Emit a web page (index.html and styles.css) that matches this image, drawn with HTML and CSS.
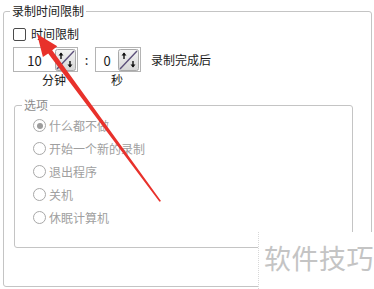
FILE: index.html
```html
<!DOCTYPE html>
<html lang="zh-CN">
<head>
  <meta charset="UTF-8" />
  <title>录制时间限制</title>
  <link rel="stylesheet" href="styles.css">
</head>
<body>

<div class="win">
  <div class="group outer">
    <div class="group-title">录制时间限制</div>

    <label class="check"><span class="box"></span>时间限制</label>

    <div class="spin-row">
      <div class="spin wide">
        <span class="val">10</span>
        <svg class="spin-btn" width="21" height="22" viewBox="0 0 21 22">
          <defs>
            <linearGradient id="g1" x1="0" y1="0" x2="0" y2="1">
              <stop offset="0" stop-color="#f4f4f4"/>
              <stop offset="1" stop-color="#d6d6d6"/>
            </linearGradient>
          </defs>
          <rect x="0.5" y="0.5" width="20" height="21" rx="2" fill="url(#g1)" stroke="#a9a9a9"/>
          <line x1="2" y1="20" x2="19" y2="2" stroke="#5c4f7a" stroke-width="1.4"/>
          <path d="M6 10V4" stroke="#111" stroke-width="1.4"/>
          <path d="M3.5 6.5L6 3.5L8.5 6.5Z" fill="#111"/>
          <path d="M15 12V18" stroke="#111" stroke-width="1.4"/>
          <path d="M12.5 15.5L15 18.5L17.5 15.5Z" fill="#111"/>
        </svg>
      </div>
      <span class="colon">:</span>
      <div class="spin narrow">
        <span class="val">0</span>
        <svg class="spin-btn" width="21" height="22" viewBox="0 0 21 22">
          <rect x="0.5" y="0.5" width="20" height="21" rx="2" fill="url(#g1)" stroke="#a9a9a9"/>
          <line x1="2" y1="20" x2="19" y2="2" stroke="#5c4f7a" stroke-width="1.4"/>
          <path d="M6 10V4" stroke="#111" stroke-width="1.4"/>
          <path d="M3.5 6.5L6 3.5L8.5 6.5Z" fill="#111"/>
          <path d="M15 12V18" stroke="#111" stroke-width="1.4"/>
          <path d="M12.5 15.5L15 18.5L17.5 15.5Z" fill="#111"/>
        </svg>
      </div>
      <span class="after">录制完成后</span>
    </div>

    <div class="unit-row">
      <span class="u-min">分钟</span>
      <span class="u-sec">秒</span>
    </div>

    <div class="group inner">
      <div class="group-title">选项</div>
      <ul class="radios">
        <li><span class="radio on"></span>什么都不做</li>
        <li><span class="radio"></span>开始一个新的录制</li>
        <li><span class="radio"></span>退出程序</li>
        <li><span class="radio"></span>关机</li>
        <li><span class="radio"></span>休眠计算机</li>
      </ul>
    </div>
  </div>

  <!-- watermark pasted over the corner -->
  <div class="watermark">软件技巧</div>

  <!-- red annotation arrow -->
  <svg class="arrow" width="374" height="289" viewBox="0 0 374 289">
    <path d="M37 34 L57.3 46.3 L52.2 50.2 L161 201 L159.5 201.8 L48.2 53.4 L42.9 57.1 Z" fill="#e8312b"/>
  </svg>
</div>

</body>
</html>
```

FILE: styles.css
```css
body {
  margin: 0;
  background: #fff;
  font-family: "Noto Sans CJK SC", "Microsoft YaHei", sans-serif;
  font-size: 12px;
  color: #1a1a1a;
}

.win {
  position: relative;
  width: 374px;
  height: 289px;
  overflow: hidden;
}

.group {
  border: 1px solid #c4c4c4;
  border-radius: 3px;
}

.group-title {
  width: fit-content;
  margin-top: -8px;
  line-height: 14px;
  padding: 0 2px;
  background: #fff;
}

.outer {
  margin: 11px 2px 0 3px;
  padding: 0 9px 38px 9px;
}

.outer > .group-title {
  margin-left: -3px;
}

.check {
  display: flex;
  align-items: center;
  gap: 5px;
  height: 14px;
  line-height: 14px;
  margin-top: 9px;
}

.box {
  width: 11px;
  height: 11px;
  border: 1px solid #4a4a4a;
  border-radius: 2px;
  background: #fff;
}

.spin-row {
  display: flex;
  align-items: center;
  margin-top: 6px;
  height: 25px;
}

.spin {
  display: flex;
  align-items: center;
  height: 23px;
  border: 1px solid #b4b4b4;
  background: #fff;
}

.spin .val {
  flex: 1;
  text-align: center;
  font-size: 13px;
  padding-top: 1px;
}

.spin-btn {
  margin-right: 1px;
  display: block;
}

.wide { width: 63px; }
.narrow { width: 44px; }

.colon {
  width: 17px;
  text-align: center;
  font-size: 13px;
}

.after {
  margin-left: 10px;
}

.unit-row {
  display: flex;
  height: 14px;
  line-height: 14px;
  margin-top: 1px;
}

.u-min { margin-left: 29px; }
.u-sec { margin-left: 45px; }

.inner {
  margin: 18px 9px 0 1px;
  padding: 0 0 0 18px;
  color: #a0a0a0;
}

.inner > .group-title {
  margin-left: -11px;
  color: #8c8c8c;
}

.radios {
  list-style: none;
  margin: 0;
  padding: 2px 0 18px;
}

.radios li {
  display: flex;
  align-items: center;
  gap: 3px;
  height: 23px;
}

.radio {
  width: 11px;
  height: 11px;
  border: 1px solid #a8a8a8;
  border-radius: 50%;
  display: flex;
  align-items: center;
  justify-content: center;
}

.radio.on::after {
  content: "";
  width: 6px;
  height: 6px;
  border-radius: 50%;
  background: #9c9c9c;
}

.watermark {
  position: absolute;
  left: 258px;
  top: 232px;
  width: 116px;
  height: 57px;
  background: #fff;
  border-left: 1px dotted #d8d8d8;
  color: #c4c4c4;
  font-size: 27px;
  line-height: 52px;
  padding-left: 5px;
  box-sizing: border-box;
  letter-spacing: 0.5px;
}

.arrow {
  position: absolute;
  left: 0;
  top: 0;
  pointer-events: none;
}
```
